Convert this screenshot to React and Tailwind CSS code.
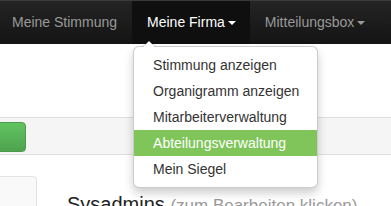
import React from "react";

const menu = [
  "Stimmung anzeigen",
  "Organigramm anzeigen",
  "Mitarbeiterverwaltung",
  "Abteilungsverwaltung",
  "Mein Siegel",
];

function Caret({ active }) {
  return (
    <span
      className={
        "ml-[3px] inline-block h-0 w-0 border-x-4 border-t-4 border-x-transparent " +
        (active ? "border-t-white" : "border-t-[#999]")
      }
    />
  );
}

export default function App() {
  return (
    <div className="relative h-[206px] w-[391px] overflow-hidden bg-white font-['Liberation_Sans',Arial,sans-serif] text-[14px] text-[#333]">
      {/* Navbar */}
      <nav className="relative z-10 h-[44px] border-t border-[#3a3a3a] bg-gradient-to-b from-[#242424] to-[#141414]">
        <ul className="-ml-[3px] flex h-full">
          <li className="flex h-full items-center px-[15px] text-[#999]">
            Meine Stimmung
          </li>
          <li className="relative flex h-full items-center bg-[#0f0f0f] pl-[15px] pr-[14px] text-white">
            Meine Firma
            <Caret active />
            {/* Dropdown */}
            <div className="absolute left-[1px] top-[45px] w-[185px] rounded-[6px] border border-black/20 bg-white py-[5px] shadow-[0_5px_10px_rgba(0,0,0,0.2)]">
              <span className="absolute -top-[7px] left-[8px] h-0 w-0 border-x-[7px] border-b-[7px] border-x-transparent border-b-black/20" />
              <span className="absolute -top-[6px] left-[9px] h-0 w-0 border-x-[6px] border-b-[6px] border-x-transparent border-b-white" />
              <ul>
                {menu.map((item) => (
                  <li
                    key={item}
                    className={
                      "whitespace-nowrap px-[19px] py-[3px] leading-[20px] " +
                      (item === "Abteilungsverwaltung"
                        ? "bg-[#80c55a] text-white"
                        : "text-[#333]")
                    }
                  >
                    {item}
                  </li>
                ))}
              </ul>
            </div>
          </li>
          <li className="flex h-full items-center px-[15px] text-[#999]">
            Mitteilungsbox
            <Caret />
          </li>
        </ul>
      </nav>

      {/* Page body */}
      <div className="h-[73px]" />
      <div className="h-[38px] border-y border-[#dedede] bg-[#f5f5f5] pt-[4px]">
        <div className="-ml-[6px] h-[30px] w-[32px] rounded-[4px] border border-[#4a9a4a] bg-gradient-to-b from-[#62c462] to-[#4ea34e]" />
      </div>
      <div className="flex pt-[21px]">
        <div className="-ml-[6px] h-[60px] w-[43px] shrink-0 rounded-[4px] border border-[#e3e3e3] bg-[#f9f9f9]" />
        <h3 className="ml-[30px] mt-[18px] whitespace-nowrap text-[20px] leading-[20px] text-[#222]">
          Sysadmins{" "}
          <small className="text-[17px] text-[#999]">(zum Bearbeiten klicken)</small>
        </h3>
      </div>
    </div>
  );
}
